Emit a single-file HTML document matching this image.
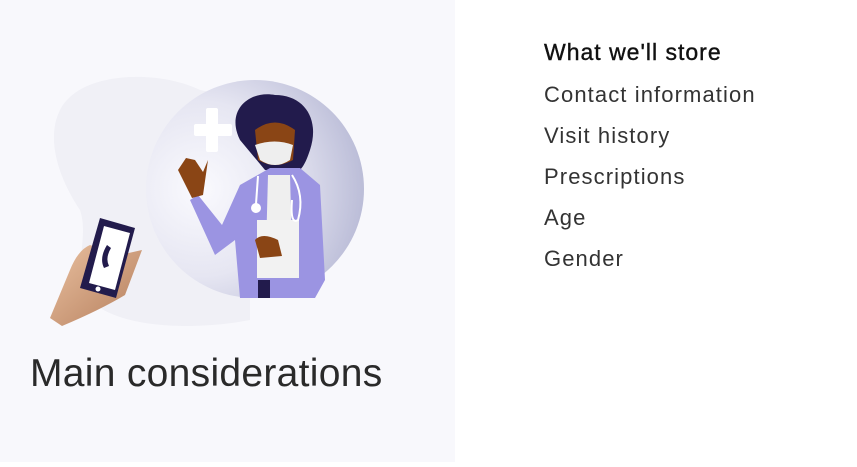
<!DOCTYPE html>
<html><head><style>
body{margin:0;width:857px;height:462px;background:#fff;font-family:"Liberation Sans",sans-serif;position:relative;overflow:hidden}
.left{position:absolute;left:0;top:0;width:455px;height:462px;background:#f8f8fc}
h1{position:absolute;left:30px;top:352px;margin:0;font-weight:300;font-size:39px;color:#2a2a2a;letter-spacing:0.3px}
.list{position:absolute;left:544px;top:37px;color:#333;font-size:22px;letter-spacing:1.1px}
.list div{height:41px;line-height:30px}
.list .t{color:#111;height:43px;font-size:23px;letter-spacing:1px;-webkit-text-stroke:0.4px #111}
</style></head><body>
<div class="left">
<svg width="455" height="462" viewBox="0 0 455 462">
<defs>
<radialGradient id="c" cx="0.25" cy="0.5" r="0.8"><stop offset="0" stop-color="#fafafe"/><stop offset="0.5" stop-color="#e6e6f2"/><stop offset="1" stop-color="#b5b7d4"/></radialGradient>
<linearGradient id="h" x1="0" y1="0" x2="1" y2="1"><stop offset="0" stop-color="#e9c0a0"/><stop offset="1" stop-color="#b57e5c"/></linearGradient>
</defs>
<path d="M60 110 C80 70 160 70 200 90 L250 100 L250 320 C200 330 120 330 90 300 C70 270 90 240 80 210 C60 180 45 140 60 110Z" fill="#f0f0f6"/>
<circle cx="255" cy="189" r="109" fill="url(#c)"/>
<rect x="206" y="108" width="12" height="44" rx="2" fill="#fff"/>
<rect x="194" y="124" width="38" height="12" rx="2" fill="#fff"/>
<path d="M240 140 C225 110 250 90 275 95 C305 95 320 120 310 150 C305 165 300 175 290 172 L265 170 Z" fill="#221b4c"/>
<path d="M255 130 Q275 115 295 130 L293 160 Q275 170 258 160Z" fill="#8a4515"/>
<path d="M255 145 Q275 138 293 145 L290 160 Q275 170 260 160Z" fill="#eeeeee"/>
<path d="M240 185 L270 168 L300 168 L320 185 L325 280 L315 298 L240 298 L235 240 L215 255 L190 200 L198 195 L222 225 Z" fill="#9b94e2"/>
<path d="M268 175 L290 175 L292 250 L266 250Z" fill="#efefef"/>
<rect x="257" y="220" width="42" height="58" fill="#f2f2f2"/>
<path d="M178 170 L186 158 L195 160 L203 172 L208 160 L203 195 L192 198Z" fill="#8a4515"/>
<path d="M255 240 Q262 232 278 240 L282 256 L260 258Z" fill="#8a4515"/>
<rect x="258" y="280" width="12" height="18" fill="#221b4c"/>
<circle cx="256" cy="208" r="5" fill="#fff"/>
<path d="M258 176 L256 204 M292 175 Q305 195 298 220 Q290 225 292 200" stroke="#fff" stroke-width="2" fill="none"/>
<path d="M50 318 L70 270 Q78 250 90 245 L120 255 L142 250 L125 295 Q100 310 62 326Z" fill="url(#h)"/>
<path d="M100 218 L135 228 L116 298 L80 288Z" fill="#221b4c"/>
<path d="M104 226 L130 233 L115 290 L89 283Z" fill="#fff"/>
<path d="M107 245 Q99 258 104 268 L109 266 Q105 258 111 248Z" fill="#221b4c"/>
<circle cx="98" cy="289" r="2.5" fill="#fff"/>
</svg>
<h1>Main considerations</h1>
</div>
<div class="list">
<div class="t">What we'll store</div>
<div>Contact information</div>
<div>Visit history</div>
<div>Prescriptions</div>
<div>Age</div>
<div>Gender</div>
</div>
</body></html>
